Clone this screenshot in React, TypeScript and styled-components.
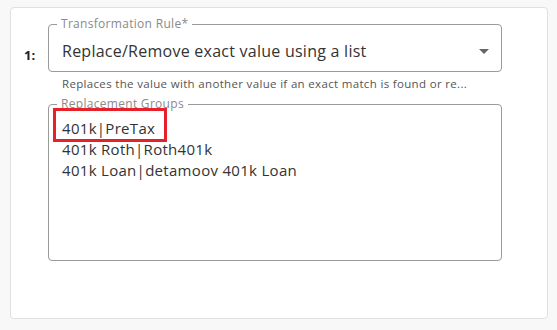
import React from "react";
import styled, { createGlobalStyle } from "styled-components";

const GlobalStyle = createGlobalStyle`
  body {
    margin: 0;
    background-color: #f8f8f8;
    font-family: "Open Sans", "Liberation Sans", sans-serif;
  }
`;

const Page = styled.div`
  padding: 7px 9px 10px 10px;
`;

const Card = styled.div`
  display: flex;
  height: 312px;
  box-sizing: border-box;
  padding: 9px 0 0 13px;
  background-color: #ffffff;
  border: 1px solid #e0e0e0;
  border-radius: 4px;
`;

const RowIndex = styled.div`
  width: 24px;
  padding-top: 29px;
  font-weight: 700;
  font-size: 13px;
  color: #222;
`;

const Fields = styled.div`
  display: flex;
  flex-direction: column;
  width: 454px;
`;

const Outlined = styled.fieldset<{ $height: number }>`
  position: relative;
  margin: 0;
  padding: 0 13px;
  height: ${(props) => props.$height}px;
  box-sizing: border-box;
  border: 1px solid #9a9a9a;
  border-radius: 4px;
  min-width: 0;
`;

const Legend = styled.legend`
  margin-left: -5px;
  padding: 0 4px;
  font-size: 12px;
  line-height: 14px;
  letter-spacing: 0.3px;
  color: #8a8a8a;
`;

const SelectRow = styled.div`
  display: flex;
  align-items: center;
  justify-content: space-between;
  height: 40px;
  font-size: 16px;
  letter-spacing: 0.25px;
  color: #333;
`;

const Caret = styled.div`
  width: 0;
  height: 0;
  margin-right: -1px;
  border-left: 5px solid transparent;
  border-right: 5px solid transparent;
  border-top: 5px solid #666;
`;

const Helper = styled.div`
  margin: 5px 0 7px 14px;
  font-size: 11.5px;
  line-height: 13px;
  letter-spacing: 0.33px;
  color: #555;
  white-space: nowrap;
`;

const Lines = styled.div`
  padding-top: 7px;
  font-size: 15px;
  line-height: 21px;
  letter-spacing: 0.3px;
  color: #333;
`;

const Line = styled.div`
  white-space: pre;
`;

const Highlight = styled.span`
  position: relative;
  display: inline-block;

  &::after {
    content: "";
    position: absolute;
    left: -9px;
    right: -12px;
    top: -10px;
    bottom: -3px;
    border: 3px solid #e8202a;
  }
`;

const groups = ["401k Roth|Roth401k", "401k Loan|detamoov 401k Loan"];

const App: React.FC = () => {
  return (
    <Page>
      <GlobalStyle />
      <Card>
        <RowIndex>1:</RowIndex>
        <Fields>
          <Outlined $height={55}>
            <Legend>Transformation Rule*</Legend>
            <SelectRow>
              <span>Replace/Remove exact value using a list</span>
              <Caret />
            </SelectRow>
          </Outlined>
          <Helper>Replaces the value with another value if an exact match is found or re...</Helper>
          <Outlined $height={164}>
            <Legend>Replacement Groups</Legend>
            <Lines>
              <Line>
                <Highlight>401k|PreTax</Highlight>
              </Line>
              {groups.map((g, i) => (
                <Line key={i}>{g}</Line>
              ))}
            </Lines>
          </Outlined>
        </Fields>
      </Card>
    </Page>
  );
};

export default App;
